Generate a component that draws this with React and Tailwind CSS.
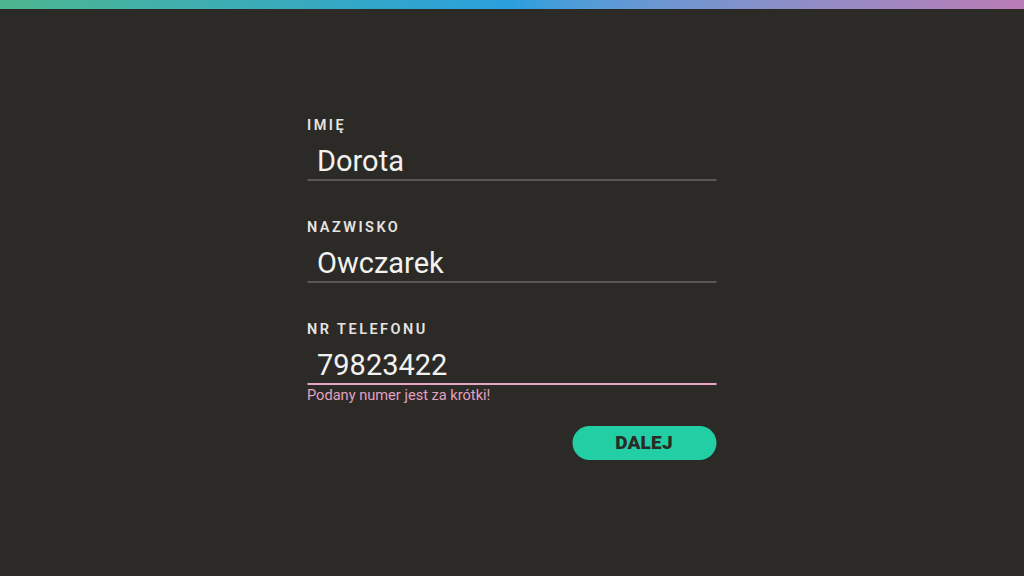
import React from "react";

function Field({ label, value, error, first }) {
  return (
    <div className={first ? "" : "mt-[39px]"}>
      <div className="text-[14.5px] leading-[16px] font-semibold tracking-[0.17em] text-[#e6e4e0]">{label}</div>
      <div
        className={
          "mt-[10px] pl-[10px] text-[29px] leading-[35px] text-[#f2f2f0] border-b-2 " +
          (error ? "border-[#e6a6c4]" : "border-[#585754]")
        }
      >
        {value}
      </div>
      {error && (
        <div className="text-[14.6px] leading-[20px] text-[#e3a1c0]">{error}</div>
      )}
    </div>
  );
}

export default function App() {
  return (
    <div
      className="min-h-screen w-full bg-[#2c2a27]"
      style={{ fontFamily: "Roboto, 'Liberation Sans', sans-serif" }}
    >
      <div className="h-[9px] bg-gradient-to-r from-[#4db68f] via-[#2a9fdd] to-[#b97bb5]" />
      <div className="flex justify-center pt-[109px]">
        <div className="w-[409px] -translate-x-[0.5px]">
          <Field first label="IMIĘ" value="Dorota" />
          <Field label="NAZWISKO" value="Owczarek" />
          <Field label="NR TELEFONU" value="79823422" error="Podany numer jest za krótki!" />
          <div className="mt-[21px] flex justify-end">
            <button className="h-[34px] w-[144px] rounded-full bg-[#22cea3] text-[19px] font-black tracking-[0.01em] text-[#2a2a27]">
              DALEJ
            </button>
          </div>
        </div>
      </div>
    </div>
  );
}
